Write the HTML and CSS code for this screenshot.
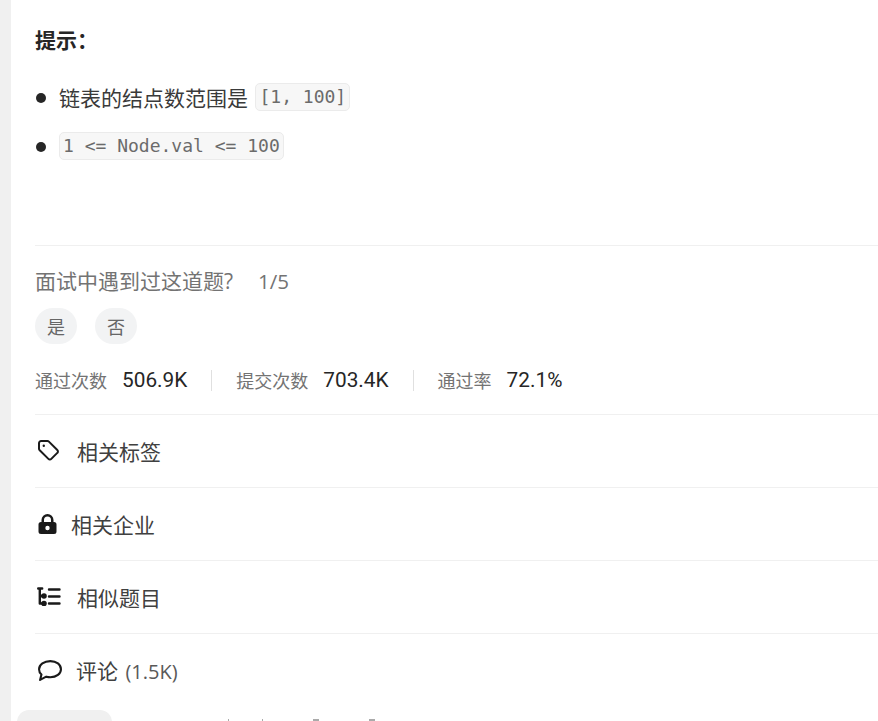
FILE: index.html
```html
<!DOCTYPE html>
<html lang="zh-CN">
<head>
<meta charset="utf-8">
<title>提示</title>
<link rel="stylesheet" href="styles.css">
</head>
<body>
<div class="page">
  <div class="rail"></div>
  <div class="column">
    <main class="content">
      <p class="hint-title">提示：</p>
      <ul class="hints">
        <li>链表的结点数范围是 <code class="after-text">[1, 100]</code></li>
        <li><code>1 &lt;= Node.val &lt;= 100</code></li>
      </ul>
      <section class="meta">
        <div class="question"><span>面试中遇到过这道题?</span><span class="ratio">1/5</span></div>
        <div class="choices"><button class="choice">是</button><button class="choice">否</button></div>
        <div class="stats">
          <div class="stat"><span class="label">通过次数</span><span class="value">506.9K</span></div>
          <div class="sep"></div>
          <div class="stat"><span class="label">提交次数</span><span class="value">703.4K</span></div>
          <div class="sep"></div>
          <div class="stat"><span class="label">通过率</span><span class="value">72.1%</span></div>
        </div>
      </section>
      <div class="row">
        <svg class="icon tag" viewBox="1.500 1.600 21 21" fill="none" stroke="currentColor" stroke-width="2" stroke-linejoin="round"><path d="M2.500 4.800A2.200 2.200 0 0 1 4.700 2.600h6.200c.6 0 1.100.2 1.500.6l8.400 8.400a2 2 0 0 1 0 2.900l-6 6a2 2 0 0 1-2.900 0L3.200 11.900a2.200 2.200 0 0 1-.7-1.600z"/><circle cx="7.300" cy="7.400" r="1.200" fill="currentColor" stroke="none"/></svg>
        <span>相关标签</span>
      </div>
      <div class="row">
        <svg class="icon lock" viewBox="3 2 18 20" fill="currentColor"><path fill-rule="evenodd" d="M12 2a6 6 0 0 1 6 6v2h.5A2.500 2.500 0 0 1 21 12.500v7A2.500 2.500 0 0 1 18.500 22h-13A2.500 2.500 0 0 1 3 19.500v-7A2.500 2.500 0 0 1 5.500 10H6V8a6 6 0 0 1 6-6zm0 2.500A3.500 3.500 0 0 0 8.500 8v2h7V8A3.500 3.500 0 0 0 12 4.500zM12 13.800a2.200 2.200 0 1 0 0 4.400 2.200 2.200 0 0 0 0-4.400z"/></svg>
        <span>相关企业</span>
      </div>
      <div class="row">
        <svg class="icon list" viewBox="0 0 24 19" fill="none" stroke="currentColor" stroke-width="2.400" stroke-linecap="round"><path d="M1.200 1.500h4M2.800 1.500v15M2.800 9h3M2.800 16.500h3M12 2.500h10.500M12 9.500h10.500M12 16.500h10.500"/><circle cx="7" cy="9" r="1.600" fill="currentColor"/><circle cx="7" cy="16.500" r="1.600" fill="currentColor"/></svg>
        <span>相似题目</span>
      </div>
      <div class="row">
        <svg class="icon comment" viewBox="1 2 23 20" fill="none" stroke="currentColor" stroke-width="2" stroke-linejoin="round"><path d="M12.800 3C18.700 3 23 6.400 23 10.700s-4.300 7.700-10.200 7.700c-1.400 0-2.700-.2-3.900-.5L3 21l1.300-5.200C2.900 14.500 2 12.700 2 10.700 2 6.400 6.900 3 12.800 3z"/></svg>
        <span>评论 <span class="count">(1.5K)</span></span>
      </div>
    </main>
    <div class="foot">
      <div class="pill"></div>
      <div class="marks"><i class="mark"></i><i class="mark"></i><i class="mark wide"></i><i class="mark wide"></i></div>
    </div>
  </div>
</div>
</body>
</html>
```
FILE: styles.css
```css
* { box-sizing: border-box; }
html, body { margin: 0; height: 100%; overflow: hidden; background: #fff; }
body {
  font-family: "Open Sans", "Noto Sans CJK SC", sans-serif;
  color: #262626;
}
.page { display: flex; height: 721px; overflow: hidden; }
.rail { width: 11px; flex: none; background: #f0f0f0; }
.column { flex: 1; min-width: 0; padding-left: 6px; }
.content { padding-left: 18px; }
.hint-title {
  margin: 0;
  padding-top: 27px;
  height: 55px;
  font-size: 21px;
  line-height: 26px;
  font-weight: 700;
}
.hints { list-style: none; margin: 0; padding: 26px 0 0 24px; height: 190px; }
.hints li {
  position: relative;
  height: 49px;
  font-size: 21px;
  line-height: 34px;
  color: #3a3a3a;
  white-space: nowrap;
}
.hints li::before {
  content: "";
  position: absolute;
  left: -23px;
  top: 12px;
  width: 10px;
  height: 10px;
  border-radius: 50%;
  background: #262626;
}
code {
  display: inline-block;
  font-family: "DejaVu Sans Mono", "Liberation Mono", monospace;
  font-size: 18px;
  line-height: 26px;
  height: 28px;
  padding: 0 3px;
  color: #6b6b6b;
  background: #f7f7f7;
  border: 1px solid #ebebeb;
  border-radius: 5px;
  vertical-align: top;
  margin-top: 2px;
}
code.after-text { margin-left: 2px; }
.meta { border-top: 1px solid #f0f0f0; height: 169px; padding-top: 19px; }
.question { display: flex; gap: 25px; font-size: 21px; line-height: 32px; color: #737373; }
.ratio { font-size: 20.500px; }
.choices { display: flex; gap: 18px; margin-top: 11px; }
.choice {
  width: 42px;
  height: 36px;
  padding: 0;
  border: 0;
  border-radius: 18px;
  background: #f2f3f4;
  color: #666;
  font: 18px/36px "Noto Sans CJK SC", sans-serif;
}
.stats { display: flex; align-items: center; margin-top: 24px; height: 24px; }
.stat { display: flex; align-items: center; gap: 15px; }
.label { font-size: 18px; color: #737373; }
.value { font-family: Roboto, "Open Sans", sans-serif; font-size: 20.800px; font-weight: 400; color: #262626; }
.sep { width: 1px; height: 21px; margin: 0 24px; background: #e0e0e0; }
.row {
  display: flex;
  align-items: center;
  gap: 15px;
  height: 73px;
  border-top: 1px solid #f0f0f0;
  font-size: 21px;
  color: #404040;
}
.icon { flex: none; color: #1a1a1a; margin-left: 3px; }
.tag { width: 21px; height: 21px; margin-top: -2px; margin-right: 3px; }
.lock { width: 19px; height: 20px; margin-top: -1px; margin-right: -1px; }
.list { width: 24px; height: 19px; margin-top: -2px; margin-left: 2px; margin-right: 1px; }
.comment { width: 24px; height: 21px; margin-top: 0; margin-right: -1px; }
.count { font-size: 20px; color: #595959; margin-left: 2px; }
.foot { display: flex; align-items: flex-start; margin-top: 4px; }
.pill { width: 95px; height: 40px; border-radius: 12px; background: #f0f0f0; }
.marks { display: flex; gap: 33px; margin-left: 116px; padding-top: 9px; }
.mark { display: block; width: 1px; height: 2px; background: #aaa; }
.mark.wide { width: 6px; margin-left: 17px; }
```
